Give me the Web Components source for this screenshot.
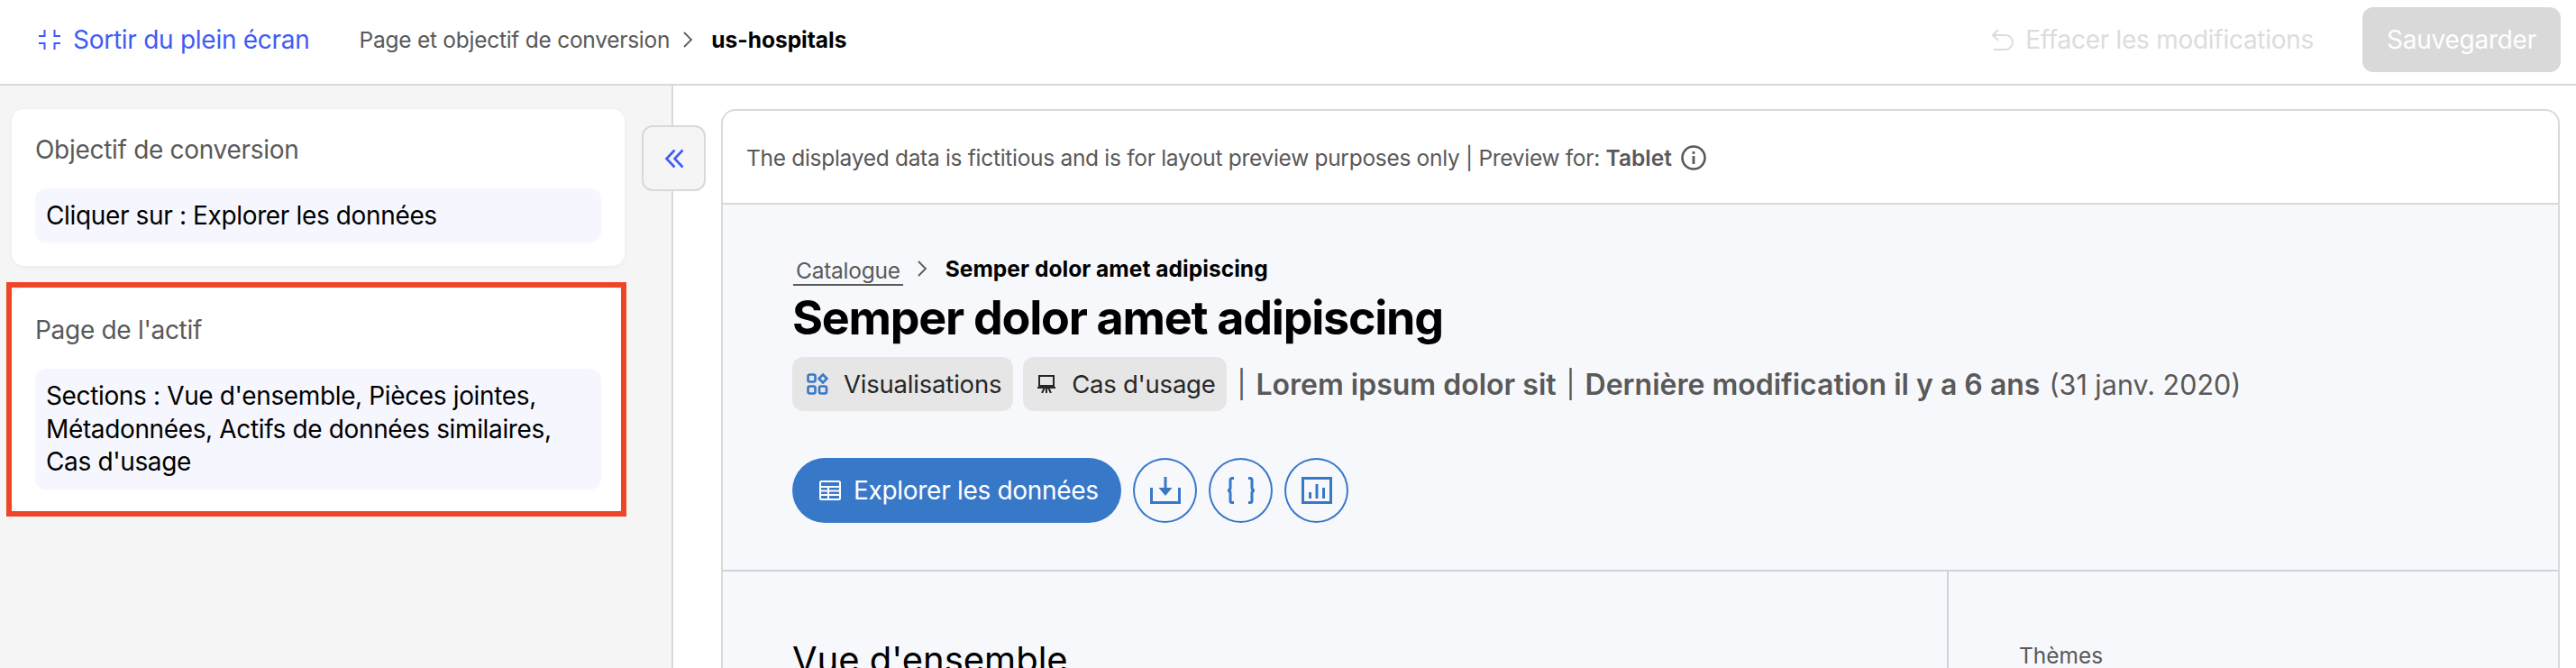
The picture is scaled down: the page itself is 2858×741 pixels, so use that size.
<!DOCTYPE html>
<html lang="fr"><head><meta charset="utf-8"><title>Page et objectif de conversion</title>
<style>
html,body{margin:0;padding:0;height:741px;overflow:hidden;background:#fff;font-family:Inter,"Liberation Sans",sans-serif}
</style></head><body>
<app-shell>
  <top-bar slot="top"></top-bar>
  <side-card slot="side" heading="Objectif de conversion">Cliquer sur : Explorer les données</side-card>
  <side-card slot="side" heading="Page de l'actif" marked style="margin-top:24px;--pad-top:27px;--head-gap:23px">Sections : Vue d'ensemble, Pièces jointes, Métadonnées, Actifs de données similaires, Cas d'usage</side-card>
  <asset-preview slot="main"></asset-preview>
</app-shell>
<script>
function comp(name, html){
  customElements.define(name, class extends HTMLElement{
    connectedCallback(){
      if(this.shadowRoot) return;
      const r=this.attachShadow({mode:'open'});
      r.innerHTML = typeof html==='function' ? html(this) : html;
    }
  });
}
comp('app-shell',`<style>
:host{display:flex;flex-direction:column;height:741px;overflow:hidden}
.body{flex:1;display:flex;min-height:0;position:relative}
aside{width:680px;padding:26px 52px 0 13px;background:#f5f5f5;border-right:2px solid #d9d9d9;flex:none}
main{flex:1;min-width:0;padding:26px 18px 0 53px;overflow:hidden}
.collapse{position:absolute;left:712px;top:44px;width:71px;height:73px;box-sizing:border-box;border:2px solid #d9d9d9;border-radius:12px;background:#f5f5f5;display:flex;align-items:center;justify-content:center}
</style>
<slot name="top"></slot>
<div class="body"><aside><slot name="side"></slot></aside>
<main><slot name="main"></slot></main>
<div class="collapse"><svg width="24" height="22" viewBox="0 0 24 22" fill="none" stroke="#3f5bf6" stroke-width="2.600" stroke-linejoin="miter"><path d="M12.500 1.500 3.500 11l9 9.500M21.500 1.500 12.500 11l9 9.500"/></svg></div></div>`);

comp('top-bar',`<style>
:host{display:flex;align-items:center;height:88px;padding-bottom:5px;border-bottom:2px solid #d9d9d9;background:#fff;box-sizing:content-box;font-family:Inter,"Liberation Sans",sans-serif}
.exit{display:flex;align-items:center;margin-left:43px;color:#3f5bf6;font-size:28px;letter-spacing:-.27px;gap:14px}
.crumbs{margin-left:55px;display:flex;align-items:center;font-size:24.5px;letter-spacing:-.26px;color:#595959}
.crumbs svg{margin:0 20px 0 14px}
.crumbs b{color:#000;font-weight:700;letter-spacing:0}
.right{margin-left:auto;display:flex;align-items:center}
.clear{display:flex;align-items:center;gap:13px;color:#dcdcdc;font-size:28px;letter-spacing:-.28px;margin-right:54px}
.save{width:220px;height:72px;border-radius:12px;background:#d9d9d9;color:#fff;font-size:28px;letter-spacing:-.25px;display:flex;align-items:center;justify-content:center;margin-right:17px}
</style>
<div class="exit"><svg width="24" height="22" viewBox="0 0 24 22" fill="none" stroke="#3f5bf6" stroke-width="2"><path d="M0 7H6.500V0M24 7H17.500V0M0 15H6.500V22M24 15H17.500V22"/></svg><span>Sortir du plein écran</span></div>
<div class="crumbs"><span>Page et objectif de conversion</span><svg width="12" height="20" viewBox="0 0 12 20" fill="none" stroke="#595959" stroke-width="1.800"><path d="M2 2l8 8-8 8"/></svg><b>us-hospitals</b></div>
<div class="right"><div class="clear"><svg width="25" height="24" viewBox="0 0 25 24" fill="none" stroke="#dcdcdc" stroke-width="2"><path d="M8 1 2 7l6 6M2 7h14a7.500 7.500 0 0 1 0 16H3"/></svg><span>Effacer les modifications</span></div><div class="save">Sauvegarder</div></div>`);

comp('side-card',el=>`<style>
:host{display:block;position:relative;background:#fff;border-radius:14px;box-shadow:0 1px 4px rgba(0,0,0,.05);padding:var(--pad-top,25px) 26px 26px;font-family:Inter,"Liberation Sans",sans-serif}
h3{margin:0 0 var(--head-gap,23px);font-size:28px;line-height:40px;font-weight:400;letter-spacing:-.3px;color:#595959}
.box{background:#f6f7fe;border-radius:12px;padding:12px;font-size:28px;line-height:36.4px;letter-spacing:-.36px;color:#000}
.mark{position:absolute;left:-6px;right:-2px;top:-6px;bottom:-4px;border:6px solid #ee4528;pointer-events:none}
</style><h3>${el.getAttribute('heading')}</h3><div class="box"><slot></slot></div>${el.hasAttribute('marked')?'<div class="mark"></div>':''}`);

comp('info-tag',el=>`<style>
:host{display:inline-flex;align-items:center;height:60px;padding:0 13px 0 16px;gap:var(--gap,18px);background:#e6e6e6;border-radius:12px;font-size:27.5px;letter-spacing:var(--track,-.25px);font-weight:400;color:#262626;flex:none}
svg{display:block}
</style><slot name="icon"></slot><slot></slot>`);

comp('round-btn',`<style>
:host{display:flex;align-items:center;justify-content:center;width:71px;height:72px;box-sizing:border-box;border:2px solid #3878c9;border-radius:50%;flex:none}
</style><slot></slot>`);

comp('asset-preview',`<style>
:host{display:block;border:2px solid #d9d9d9;border-bottom:0;border-radius:16px 16px 0 0;background:#f7f8fc;font-family:Inter,"Liberation Sans",sans-serif;height:700px;overflow:hidden}
.note{height:101px;padding-top:1px;background:#fff;border-radius:14px 14px 0 0;border-bottom:2px solid #d9d9d9;display:flex;align-items:center;padding-left:26px;gap:10px;font-size:24.5px;letter-spacing:-.3px;color:#595959}
.note b{font-weight:600;letter-spacing:0}
.hero{height:407px;box-sizing:border-box;border-bottom:2px solid #cdd3dc;padding:54px 0 0 77px}
.crumb{display:flex;align-items:center;font-size:24.5px;letter-spacing:-.25px;height:34px;color:#595959}
.crumb span{border-bottom:2px solid #595959;padding:0 3px;line-height:32px;height:31px;margin-top:5px;margin-left:1px}
.crumb svg{margin:0 20px 0 15px}
.crumb b{color:#000;font-weight:700;letter-spacing:.05px}
h1{margin:6px 0 0;font-size:52px;line-height:64px;font-weight:700;color:#000;letter-spacing:-1.25px}
.meta{display:flex;align-items:center;gap:11px;margin-top:11px;color:#595959;font-size:32px}
.meta b{font-weight:600}
.meta .sep{font-weight:400;font-size:30px}
.meta .date{font-size:30.5px;font-weight:400;margin-left:-1px}
.acts{display:flex;align-items:center;gap:13px;margin-top:52px}
.explore{display:flex;align-items:center;gap:14px;width:365px;height:72px;box-sizing:border-box;padding-left:30px;background:#3878c9;border-radius:36px;color:#fff;font-size:28px;letter-spacing:-.3px}
.lower{display:flex;height:200px}
.left{width:1360px;box-sizing:border-box;border-right:2px solid #cdd3dc;padding:74px 0 0 77px;font-size:40px;line-height:48px;color:#000}
.right{padding:78px 0 0 78px;font-size:24.5px;line-height:30px;color:#595959}
</style>
<div class="note"><span>The displayed data is fictitious and is for layout preview purposes only | Preview for: <b>Tablet</b></span>
<svg width="28" height="28" viewBox="0 0 28 28" fill="none" stroke="#595959"><circle cx="14" cy="14" r="12.500" stroke-width="2.600"/><path d="M14 12v9M14 7v2.800" stroke-width="2.800"/></svg></div>
<div class="hero">
  <div class="crumb"><span>Catalogue</span><svg width="12" height="20" viewBox="0 0 12 20" fill="none" stroke="#595959" stroke-width="1.800"><path d="M2 2l8 8-8 8"/></svg><b>Semper dolor amet adipiscing</b></div>
  <h1>Semper dolor amet adipiscing</h1>
  <div class="meta">
    <info-tag style="--gap:17px;--track:-.2px"><svg slot="icon" width="24" height="24" viewBox="0 0 24 24" fill="none" stroke="#3878c9" stroke-width="2.600"><rect x="1.500" y="1.500" width="8" height="8" rx="2"/><path d="M18 1.500 22.500 6 18 10.500 13.500 6Z"/><rect x="1.500" y="14.500" width="8" height="8" rx="2"/><rect x="14" y="14.500" width="8" height="8" rx="2"/></svg>Visualisations</info-tag>
    <info-tag><svg slot="icon" width="20" height="20" viewBox="0 0 20 20" fill="none" stroke="#262626" stroke-width="2"><rect x="2" y="1" width="16" height="11"/><path d="M0 14h20M10 14v6M5 20l3-6M15 20l-3-6"/></svg>Cas d'usage</info-tag>
    <span class="sep">|</span><b>Lorem ipsum dolor sit</b><span class="sep">|</span><b>Dernière modification il y a 6 ans</b><span class="date">(31 janv. 2020)</span>
  </div>
  <div class="acts">
    <div class="explore"><svg width="24" height="22" viewBox="0 0 24 22" fill="none" stroke="#fff" stroke-width="2"><rect x="1" y="1" width="22" height="20" rx="1.500"/><path d="M1 7h22M1 11.500h22M1 16h22M10 7v14"/></svg><span>Explorer les données</span></div>
    <round-btn><svg width="34" height="30" viewBox="0 0 34 30" fill="none" stroke="#3878c9" stroke-width="3"><path d="M1.500 12v16.500h31V12"/><path d="M17 0v13"/><path d="M9.500 12h15L17 21Z" fill="#3878c9" stroke="none"/></svg></round-btn>
    <round-btn><svg width="34" height="30" viewBox="0 0 34 30" fill="none" stroke="#3878c9" stroke-width="3"><path d="M9 1.500H7A2 2 0 0 0 5 3.500V12q0 3-3 3 3 0 3 3v8.500a2 2 0 0 0 2 2h2M25 1.500h2a2 2 0 0 1 2 2V12q0 3 3 3-3 0-3 3v8.500a2 2 0 0 1-2 2h-2"/></svg></round-btn>
    <round-btn><svg width="34" height="30" viewBox="0 0 34 30" fill="none" stroke="#3878c9"><rect x="1.500" y="1.500" width="31" height="27" stroke-width="3"/><path d="M9.500 24v-7M17 24V8M24.500 24V12" stroke-width="3"/></svg></round-btn>
  </div>
</div>
<div class="lower"><div class="left">Vue d'ensemble</div><div class="right">Thèmes</div></div>`);
</script>
</body></html>
